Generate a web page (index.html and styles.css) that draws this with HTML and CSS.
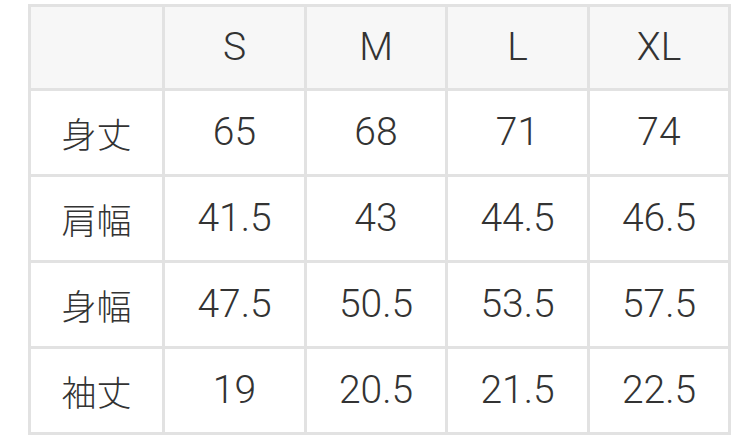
FILE: index.html
```html
<!DOCTYPE html>
<html lang="ja">
<head>
<meta charset="utf-8">
<link rel="stylesheet" href="styles.css">
</head>
<body>
<table class="size-table">
  <colgroup>
    <col class="c-label"><col class="c-s"><col class="c-m"><col class="c-l"><col class="c-xl">
  </colgroup>
  <thead>
    <tr class="head"><th></th><th>S</th><th>M</th><th>L</th><th>XL</th></tr>
  </thead>
  <tbody>
    <tr><th>身丈</th><td>65</td><td>68</td><td>71</td><td>74</td></tr>
    <tr><th>肩幅</th><td>41.5</td><td>43</td><td>44.5</td><td>46.5</td></tr>
    <tr><th>身幅</th><td>47.5</td><td>50.5</td><td>53.5</td><td>57.5</td></tr>
    <tr><th>袖丈</th><td>19</td><td>20.5</td><td>21.5</td><td>22.5</td></tr>
  </tbody>
</table>
</body>
</html>
```

FILE: styles.css
```css
html, body {
  margin: 0;
  padding: 0;
  background: #ffffff;
}

.size-table {
  margin: 4px 0 0 28px;
  border-collapse: separate;
  border-spacing: 3px;
  background: #e2e2e2;
  table-layout: fixed;
  width: 703px;
  font-family: Roboto, "Noto Sans CJK JP", sans-serif;
  font-size: 39px;
  font-weight: 300;
  color: #333333;
}

.c-label { width: 131px; }
.c-s { width: 139px; }
.c-m { width: 138px; }
.c-l { width: 139px; }
.c-xl { width: 138px; }

.size-table th,
.size-table td {
  padding: 0;
  text-align: center;
  vertical-align: middle;
  background: #ffffff;
  font-weight: 300;
  height: 83px;
  line-height: 1;
}

.size-table tbody th {
  font-family: "Noto Sans CJK JP", sans-serif;
  font-weight: 300;
  font-size: 35px;
}

.size-table .head th {
  background: #f7f7f7;
  height: 81px;
}
```
